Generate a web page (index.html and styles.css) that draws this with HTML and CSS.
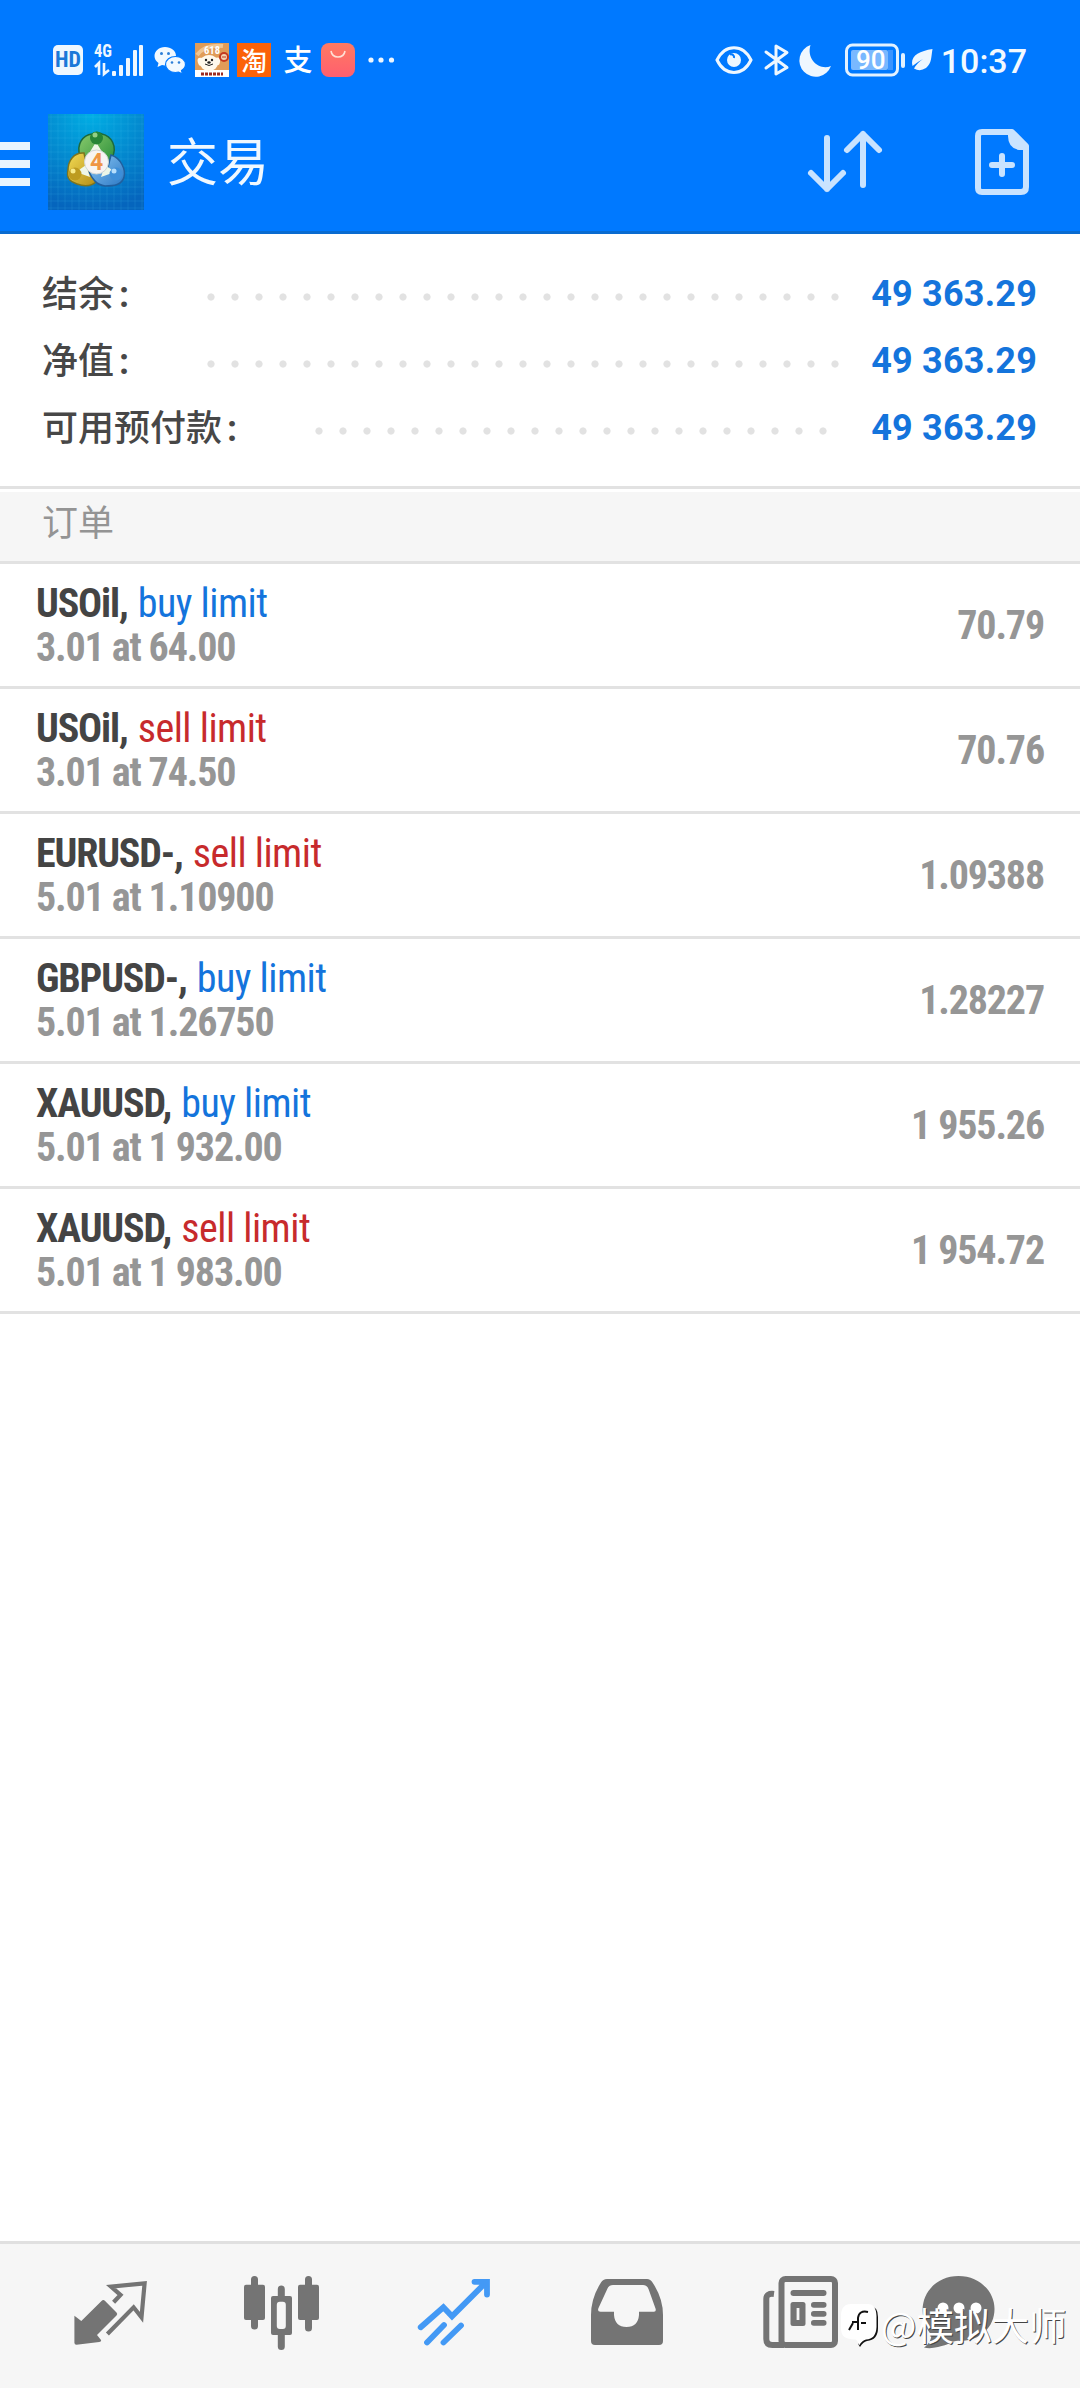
FILE: index.html
```html
<!DOCTYPE html>
<html lang="zh-CN">
<head>
<meta charset="utf-8">
<title>交易</title>
<link rel="stylesheet" href="styles.css">
</head>
<body>
<div class="app">
  <header class="header">
    <div class="status">
      <div class="status-left">
        <span class="hd">HD</span>
        <svg class="signal" width="50" height="34" viewBox="0 0 50 34">
          <text x="0" y="14" class="net" textLength="18" lengthAdjust="spacingAndGlyphs">4G</text>
          <path d="M1 24L5 20V32M10 20V31L15 27" fill="none" stroke="#eef7ff" stroke-width="2.6"/>
          <g fill="#eef7ff"><rect x="18" y="28" width="4" height="5" rx="1"/><rect x="25" y="22" width="4" height="11" rx="1"/><rect x="32" y="15" width="4" height="18" rx="1"/><rect x="39" y="7" width="4" height="26" rx="1"/><rect x="45" y="2" width="4" height="31" rx="1"/></g>
        </svg>
        <svg class="wechat" width="32" height="34" viewBox="0 0 32 34">
          <path d="M11 4C5 4 .5 8 .5 13c0 3 1.500 5 4 7l-1 4 4.500-2 3 .5c6 0 11-4 11-9.500S17 4 11 4z" fill="#f2f9ff"/>
          <path d="M21.500 13.500c-5.500 0-10 3.500-10 8s4.500 8 10 8l3-.5 4 2-1-3.500c2.500-1.500 4-3.500 4-6 0-4.500-4.500-8-10-8z" fill="#f2f9ff" stroke="#0079ff" stroke-width="1.200"/>
          <g fill="#2d7fd8"><circle cx="7.500" cy="10.500" r="1.500"/><circle cx="14.500" cy="10.500" r="1.500"/><circle cx="18" cy="19.500" r="1.300"/><circle cx="25" cy="19.500" r="1.300"/></g>
        </svg>
        <svg class="jd" width="34" height="34" viewBox="0 0 34 34">
          <path fill="#e09c58" d="M0 0h34v34H0z"/><path d="M2 12Q10 1 28 3" fill="none" stroke="#f0c591" stroke-width="4"/>
          <path fill="#fff" d="M0 27h34v7H0z"/>
          <ellipse cx="14" cy="20" rx="9" ry="8" fill="#fff9ec"/><path d="M7 15Q1 14 3 20t5 0zM20 15q6-2 5 4t-6 1z" fill="#fff9ec"/>
          <circle cx="11" cy="17" r="1.200" fill="#222"/><circle cx="17" cy="17" r="1.200" fill="#222"/><ellipse cx="14" cy="19.500" rx="1.700" ry="1.200" fill="#222"/><path d="M10 21q4 3 8 0" stroke="#222" fill="none"/>
          <circle cx="29" cy="14" r="4" fill="#f3d3b0" stroke="#c43b20" stroke-width="2"/><path d="M27 14h4" stroke="#c43b20"/>
          <text x="9" y="11" class="jd-num" textLength="16" lengthAdjust="spacingAndGlyphs">618</text>
          <path d="M6 31h22" stroke="#9c2b22" stroke-width="3" stroke-dasharray="3 1"/>
        </svg>
        <span class="taobao">淘</span>
        <span class="alipay">支</span>
        <svg class="bag" width="34" height="34" viewBox="0 0 34 34"><defs><linearGradient id="bagFill" x2="0" y2="1"><stop stop-color="#ff7a62"/><stop offset="1" stop-color="#ff5f6f"/></linearGradient></defs><rect width="34" height="34" rx="8" fill="url(#bagFill)"/><path d="M10 8q1 6 7 6t7-6" fill="none" stroke="#ffe0d5" stroke-width="1.600"/></svg>
        <svg class="more" width="28" height="34" viewBox="0 0 28 34" fill="#eef7ff"><circle cx="3" cy="17" r="2.600"/><circle cx="13" cy="17" r="2.600"/><circle cx="23.500" cy="17" r="2.600"/></svg>
      </div>
      <div class="status-right">
        <svg width="38" height="34" viewBox="0 0 38 34"><path d="M2 17C10 .5 28 .5 36 17 28 33.500 10 33.500 2 17z" fill="none" stroke="#eef7ff" stroke-width="3"/><circle cx="19" cy="17" r="7" fill="#eef7ff"/><path d="M19 15a3 3 0 0 0-4-3.500" fill="none" stroke="#0079ff" stroke-width="2"/></svg>
        <svg class="bt" width="26" height="34" viewBox="0 0 26 34"><path d="M2 9l21 15.500L12 31V3l11 6.500L2 25" fill="none" stroke="#eef7ff" stroke-width="3" stroke-linejoin="round" stroke-linecap="round"/></svg>
        <svg class="moon" width="32" height="34" viewBox="0 0 32 34"><path d="M10.500 2A16.300 16.300 0 1 0 31 23C20 28 6 17 10.500 2z" fill="#eef7ff"/></svg>
        <svg class="battery" width="62" height="34" viewBox="0 0 62 34"><rect x="1.500" y="2" width="51" height="30" rx="6" fill="none" stroke="#e2f1ff" stroke-width="3"/><rect x="6" y="7" width="37" height="20" rx="2" fill="#79b8ff"/><rect x="43" y="7" width="5" height="20" fill="#3b94ff"/><rect x="56" y="10" width="4" height="15" rx="2" fill="#e2f1ff"/><text x="11" y="26" class="battery-num">90</text></svg>
        <svg class="leaf" width="22" height="34" viewBox="0 0 22 34"><path d="M21.500 6C9 8 1 12 1 20l.5 3Q8 18 12 16 6 20 3 25.500 9 29 15 25C21 20 20 14 21.500 6zM3 25L1 28" fill="#eef7ff"/></svg>
        <span class="time">10:37</span>
      </div>
    </div>
    <div class="bar">
      <div class="menu"><i></i><i></i><i></i></div>
      <svg class="logo" width="96" height="96" viewBox="0 0 96 96">
        <defs>
          <radialGradient id="sky" cx=".45" cy="0" r="1"><stop stop-color="#00aee4"/><stop offset=".5" stop-color="#038bd0"/><stop offset="1" stop-color="#0565bd"/></radialGradient>
          <pattern id="grid" width="7" height="7" patternUnits="userSpaceOnUse"><path d="M3 0V7M0 3H7" stroke="#43c0ef" stroke-opacity=".14"/></pattern>
          <linearGradient id="green" x2="1" y2="1"><stop stop-color="#8bcb6d"/><stop offset="1" stop-color="#218a35"/></linearGradient>
          <linearGradient id="gold" x2="1" y2="1"><stop stop-color="#f3dc55"/><stop offset="1" stop-color="#b38c16"/></linearGradient>
          <linearGradient id="blue" x2="1" y2="1"><stop stop-color="#8cc8f5"/><stop offset="1" stop-color="#2b78c4"/></linearGradient>
        </defs>
        <path fill="url(#sky)" d="M0 0h96v96H0z"/><path fill="url(#grid)" d="M0 0h96v96H0z"/>
        <g stroke-width="1.500">
          <path d="M32 42c-4-12 3-21 12-22q5-3 10 0c9 2 16 12 10 24l-9 8-16 4z" fill="url(#green)" stroke="#1c6a3d"/>
          <path d="M36 39c-10-1-16 8-16 17-2 9 3 12 9 14 8 3 15 2 20-3l-10-14z" fill="url(#gold)" stroke="#7c741e"/>
          <path d="M63 41c10 3 15 15 13 22-2 8-10 9-19 9-9-1-13-8-16-14l18-1z" fill="url(#blue)" stroke="#215f9d"/>
        </g>
        <path d="M48 28l8 13-16 0zM28 58l10-7 4 12zM67 58l-10-7-4 12z" fill="#eef7e8"/>
        <circle cx="48.500" cy="24" r="6.500" fill="#278536"/><circle cx="47" cy="21" r="2.500" fill="#93cf85"/>
        <circle cx="27" cy="60" r="6.500" fill="#bd9b20"/><circle cx="25" cy="57" r="2.500" fill="#f7e98a"/>
        <circle cx="68" cy="60" r="6.500" fill="#3d8ed8"/><circle cx="66" cy="57" r="2.500" fill="#b5defc"/>
        <circle cx="48.500" cy="48" r="12" fill="#f7f4f2" stroke="#cfd5d5"/>
        <text x="48.500" y="56" text-anchor="middle" class="logo-num">4</text>
      </svg>
      <h1>交易</h1>
      <svg class="sort" width="76" height="66" viewBox="0 0 76 66"><path d="M20 9V60M4 44L20 60 36 44M56 56V5M40 21L56 5 72 21" fill="none" stroke="#c9e3ff" stroke-width="6" stroke-linecap="round" stroke-linejoin="round"/></svg>
      <svg class="newdoc" width="54" height="66" viewBox="0 0 54 66"><path d="M7 3H37L51 17V58q0 5-5 5H7q-4 0-4-4V7q0-4 4-4z" fill="none" stroke="#c9e3ff" stroke-width="6" stroke-linejoin="round"/><path d="M33 3h6l13 14v4H44Q33 19 33 7z" fill="#c9e3ff"/><path d="M27 27v18M17 36H37" stroke="#c9e3ff" stroke-width="6" stroke-linecap="round"/></svg>
    </div>
  </header>

  <section class="summary">
    <div class="sum-row"><span class="label">结余<b>:</b></span><i class="dots"></i><strong>49 363.29</strong></div>
    <div class="sum-row"><span class="label">净值<b>:</b></span><i class="dots"></i><strong>49 363.29</strong></div>
    <div class="sum-row"><span class="label">可用预付款<b>:</b></span><i class="dots short"></i><strong>49 363.29</strong></div>
  </section>
  <h2>订单</h2>
  <main class="orders">
    <div class="order"><div><p class="name">USOil, <span class="buy">buy limit</span></p><p class="detail">3.01 at 64.00</p></div><span class="price">70.79</span></div>
    <div class="order"><div><p class="name">USOil, <span class="sell">sell limit</span></p><p class="detail">3.01 at 74.50</p></div><span class="price">70.76</span></div>
    <div class="order"><div><p class="name">EURUSD-, <span class="sell">sell limit</span></p><p class="detail">5.01 at 1.10900</p></div><span class="price">1.09388</span></div>
    <div class="order"><div><p class="name">GBPUSD-, <span class="buy">buy limit</span></p><p class="detail">5.01 at 1.26750</p></div><span class="price">1.28227</span></div>
    <div class="order"><div><p class="name">XAUUSD, <span class="buy">buy limit</span></p><p class="detail">5.01 at 1 932.00</p></div><span class="price">1 955.26</span></div>
    <div class="order"><div><p class="name">XAUUSD, <span class="sell">sell limit</span></p><p class="detail">5.01 at 1 983.00</p></div><span class="price">1 954.72</span></div>
  </main>

  <nav class="tabs">
    <svg viewBox="0 0 96 96"><path d="M51.600 36.300L58.500 29 49 20.600 82.600 17.300 79.500 51.300 71.600 41.300 45.400 68" fill="none" stroke="#747474" stroke-width="4.200"/><path d="M39.500 35q1.800-2 3.600 0L54.500 46.500q1.500 1.500 0 3L35 69l4.200 5.300q0 1.500-2 1.700L14.500 78.800q-2.100 0-2.100-2V49.700L19.300 55z" fill="#747474"/></svg>
    <svg viewBox="0 0 96 96"><path d="M20.500 13.500V60M47.300 23V80.500M74.500 13.500V62" stroke="#747474" stroke-width="7" stroke-linecap="round"/><g fill="#747474"><rect x="10" y="18.700" width="21" height="35.300" rx="2"/><rect x="37" y="30" width="21" height="39" rx="2"/><rect x="64" y="18.700" width="21" height="35.300" rx="2"/></g><rect x="42.800" y="35.700" width="9" height="27.300" rx="3" fill="#f6f6f6"/></svg>
    <svg viewBox="0 0 96 96"><path d="M13.700 61.300L36.400 41.300 45 50.300 79 16.300M67.500 15.800H80V28.500M20 76.500L37 59M36.500 76.500L54 59.500" fill="none" stroke="#4399f5" stroke-width="5.800" stroke-linecap="round"/></svg>
    <svg viewBox="0 0 96 96"><path fill-rule="evenodd" fill="#747474" d="M28 13H68q3.500 0 5.500 3.500Q84 32 84 49V75q0 4-4 4H16q-4 0-4-4V49q0-17 10-32.500Q24 13 28 13zM34 19q-4 0-5.500 3.500L19.500 42q-1.500 3.700 2 3.700H35V49q1 12 12.500 12T60 49V45.700H75q2.500 0 1.500-3.200L69.500 23Q68 19 64 19z"/></svg>
    <svg viewBox="0 0 96 96"><g fill="none" stroke="#747474"><rect x="29.500" y="13" width="53.500" height="66" rx="4" stroke-width="6"/><path d="M22 28Q14.300 27 14.300 33V73q0 6 6 6H32" stroke-width="6"/></g><g fill="#747474"><rect x="38.500" y="24" width="36" height="6" rx="3"/><rect x="38.500" y="36" width="15" height="24" rx="2.500"/><rect x="59" y="36" width="15.500" height="5.800" rx="2.800"/><rect x="59" y="45" width="15.500" height="5.800" rx="2.800"/><rect x="59" y="54" width="15.500" height="5.800" rx="2.800"/></g><path fill="#f6f6f6" d="M44.600 42h2.800v12h-2.800z"/></svg>
    <svg viewBox="0 0 96 96"><path d="M34.500 10C55 10 70.500 25 70.500 43S56 75 36 75c-8-1-10 4-22 6q-8 2-14 .5C5 78 7 74 7.500 69 2 63-1.400 53-1.400 44-1.400 25 14 10 34.500 10z" fill="#747474"/><g fill="#fff"><circle cx="19" cy="42" r="5.500"/><circle cx="35" cy="42" r="5.500"/><circle cx="52" cy="42" r="5.500"/></g></svg>
  </nav>
  <div class="watermark">
    <svg width="38" height="46" viewBox="0 0 38 46"><path d="M28 3Q37 3 37 14V25Q37 37 26 38q-4 1-7 6L17 41 35 14z" fill="#111"/><path d="M10 1H27Q35 1 35.500 13V24Q35 36 25 36.500q-4 1-7 6-1-4-3-6Q0 37 0 26V13Q0 1 10 1z" fill="#fff"/><path d="M27 9q-9-2-10 6V27M11 19H17M20 20H25M12 20L8 27" fill="none" stroke="#111" stroke-width="2"/></svg>
    <span>@模拟大师</span>
  </div>
</div>
</body>
</html>
```
FILE: styles.css
```css
* { box-sizing: border-box; margin: 0; padding: 0; }
body { background: #fff; font-family: Roboto, "Noto Sans CJK SC", sans-serif; }
svg { display: block; flex: none; overflow: visible; }
.app { position: relative; display: flex; flex-direction: column; width: 1080px; height: 2388px; overflow: hidden; }

.header { height: 234px; background: #0079ff; border-bottom: 3px solid #0a6bd0; }
.status { display: flex; justify-content: space-between; height: 77px; padding: 43px 53px 0; }
.status-left, .status-right { display: flex; align-items: center; height: 34px; }
.hd { width: 30px; height: 30px; border-radius: 5px; background: #eef7ff; color: #1b78d8; font: 700 22px/30px "Roboto Condensed", sans-serif; text-align: center; }
.signal { margin-left: 11px; }
.net { font: 700 18px "Roboto Condensed", sans-serif; fill: #eef7ff; }
.wechat { margin-left: 10px; }
.jd { margin-left: 9px; }
.jd-num { font: 700 11px "Roboto Condensed", sans-serif; fill: #fff; }
.taobao { width: 34px; height: 34px; margin-left: 8px; background: #fb6209; color: #fff; font: 500 26px/33px "Noto Sans CJK SC", sans-serif; text-align: center; }
.alipay { width: 34px; height: 34px; margin-left: 10px; color: #fff; font: 500 29px/31px "Noto Sans CJK SC", sans-serif; text-align: center; }
.bag { margin-left: 6px; }
.more { margin-left: 13px; }
.bt { margin-left: 11px; }
.moon { margin-left: 10px; }
.battery { margin-left: 13px; }
.battery-num { font: 500 26px Roboto, sans-serif; fill: #fff; }
.leaf { margin-left: 4px; }
.time { margin-left: 8px; padding-top: 1px; color: #f2f9ff; font-size: 34px; line-height: 34px; font-weight: 500; }

.bar { display: flex; align-items: center; height: 96px; margin-top: 37px; padding-right: 51px; }
.menu { display: flex; flex-direction: column; gap: 10px; width: 30px; margin-right: 18px; padding-top: 4px; }
.menu i { height: 8px; background: #e8f5ff; }
.logo-num { font: 700 23px Roboto, sans-serif; fill: #ef9644; }
h1 { flex: 1; margin-left: 23px; padding-top: 4px; color: #f0f8ff; font-size: 51px; line-height: 92px; font-weight: 400; }
.sort { margin-right: 92px; }

.summary { height: 255px; padding: 26px 43px 0 42px; border-bottom: 3px solid #e2e2e2; }
.sum-row { display: flex; align-items: center; height: 67px; }
.label { padding-top: 3px; color: #474747; font-size: 36px; line-height: 64px; font-weight: 500; }
.label b { margin-left: 5px; }
.dots { flex: none; width: 648px; height: 24px; margin: 7px 24px 0 auto; background: radial-gradient(circle at 12px 12px, #e2e2e2 3.2px, transparent 4px) 0 0 / 24px 24px; }
.dots.short { width: 528px; margin-right: 36px; }
.sum-row strong { padding-top: 2px; color: #1474dc; font-size: 36px; line-height: 65px; font-weight: 700; letter-spacing: .2px; }

h2 { height: 75px; padding: 1px 0 0 42px; border-top: 3px solid #fff; border-bottom: 3px solid #e2e2e2; background: #f6f6f6; color: #949494; font-size: 36px; line-height: 62px; font-weight: 400; }
.orders { flex: 1; }
.order { display: flex; justify-content: space-between; height: 125px; padding: 18px 36px 0; border-bottom: 3px solid #e2e2e2; font-family: "Roboto Condensed", sans-serif; font-size: 40px; font-weight: 700; letter-spacing: -1.15px; }
.order p { line-height: 44px; white-space: nowrap; }
.name { color: #444; }
.name span { margin-left: 2px; font-weight: 400; letter-spacing: -.5px; }
.buy { color: #1474dc; }
.sell { color: #c72a2c; }
.detail, .price { color: #969696; }
.price { line-height: 88px; }

.tabs { display: flex; height: 147px; padding: 22px 0 0 62px; gap: 76.400px; border-top: 3px solid #e0e0e0; background: #f6f6f6; }
.tabs svg { width: 96px; height: 96px; }
.watermark { position: absolute; left: 841px; top: 2303px; display: flex; align-items: center; color: #fff; font: 400 37.500px/44px "Noto Sans CJK SC", sans-serif; }
.watermark span { margin: -5px 0 0 2px; white-space: nowrap; text-shadow: 1px 1px 0 #444; }
```
